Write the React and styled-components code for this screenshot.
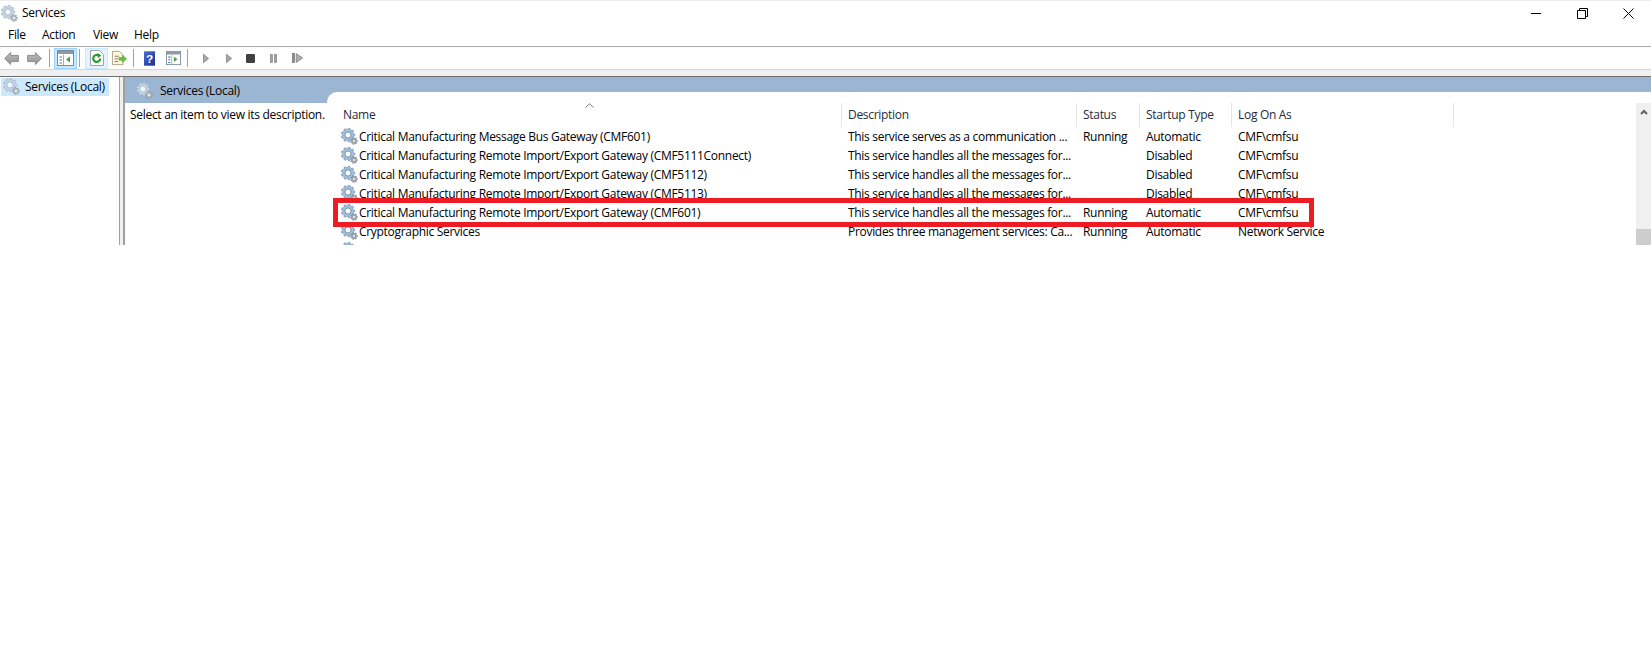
import React from "react";
import styled, { createGlobalStyle } from "styled-components";

const UI_FONT = `"Open Sans", "Noto Sans", "Liberation Sans", sans-serif`;
const COLUMNS = "505px 235px 63px 92px 222px 1fr";

const services = [
  ["Critical Manufacturing Message Bus Gateway (CMF601)", "This service serves as a communication ...", "Running", "Automatic", "CMF\\cmfsu"],
  ["Critical Manufacturing Remote Import/Export Gateway (CMF5111Connect)", "This service handles all the messages for...", "", "Disabled", "CMF\\cmfsu"],
  ["Critical Manufacturing Remote Import/Export Gateway (CMF5112)", "This service handles all the messages for...", "", "Disabled", "CMF\\cmfsu"],
  ["Critical Manufacturing Remote Import/Export Gateway (CMF5113)", "This service handles all the messages for...", "", "Disabled", "CMF\\cmfsu"],
  ["Critical Manufacturing Remote Import/Export Gateway (CMF601)", "This service handles all the messages for...", "Running", "Automatic", "CMF\\cmfsu"],
  ["Cryptographic Services", "Provides three management services: Ca...", "Running", "Automatic", "Network Service"],
  ["", "", "", "", ""],
];

function gearPath(cx, cy, outer, inner, teeth) {
  const pts = [];
  for (let i = 0; i < teeth; i++) {
    const a = (i / teeth) * Math.PI * 2;
    const w = Math.PI / teeth / 1.7;
    [[-w * 1.25, inner], [-w * 0.6, outer], [w * 0.6, outer], [w * 1.25, inner]].forEach(([d, r]) => {
      pts.push(`${(cx + Math.cos(a + d) * r).toFixed(2)} ${(cy + Math.sin(a + d) * r).toFixed(2)}`);
    });
  }
  return `M${pts.join("L")}Z`;
}

const GearIcon = ({ dim }) => (
  <svg width="17" height="17" viewBox="0 0 17 17">
    <path d={gearPath(7, 7, 6.8, 5.4, 9)} fill={dim ? "#c3d5e6" : "#a5c1dc"} stroke={dim ? "#9db2c7" : "#6b8cab"} strokeWidth="0.7" />
    <circle cx="7" cy="7" r="3.1" fill={dim ? "#f3f6fa" : "#f6f9fc"} stroke={dim ? "#9db2c7" : "#5f7d9b"} strokeWidth="0.8" />
    <path d={gearPath(13, 13, 3.6, 2.6, 7)} fill={dim ? "#b4bbc2" : "#98a1a9"} stroke="#79828b" strokeWidth="0.4" />
    <circle cx="13" cy="13" r="1" fill="#fff" />
  </svg>
);

const ArrowIcon = ({ flip }) => (
  <svg width="17" height="15" viewBox="0 0 17 15" style={flip ? { transform: "scaleX(-1)" } : undefined}>
    <defs>
      <linearGradient id="arrowGrey" x1="0" y1="0" x2="0" y2="1">
        <stop offset="0" stopColor="#c0c0c0" />
        <stop offset="1" stopColor="#8f8f8f" />
      </linearGradient>
    </defs>
    <path d="M0.7 7.5 L7.5 0.7 V4 H16.3 V11 H7.5 V14.3 Z" fill="url(#arrowGrey)" stroke="#858585" strokeWidth="1" />
  </svg>
);

const PaneIcon = ({ arrow }) => (
  <svg width="17" height="16" viewBox="0 0 17 16">
    <rect x="0.5" y="0.5" width="16" height="15" fill="#fff" stroke="#7d8a96" />
    <rect x="1" y="1" width="15" height="3" fill="#8d99a5" />
    <path d="M6.5 4.5 V15" stroke="#a5afb9" />
    <path d="M2.5 7 H5 M2.5 10 H5 M2.5 13 H5" stroke="#4e7bb0" strokeWidth="1.2" />
    {arrow === "left" ? (
      <path d="M13 6.5 V12.5 L9 9.5 Z" fill="#3ea33e" />
    ) : (
      <path d="M9 6.5 V12.5 L13 9.5 Z" fill="#3ea33e" />
    )}
  </svg>
);

const RefreshIcon = () => (
  <svg width="14" height="16" viewBox="0 0 14 16">
    <path d="M0.5 0.5 H9.5 L13.5 4.5 V15.5 H0.5 Z" fill="#fff" stroke="#9aa4ad" />
    <path d="M10.2 8.5 A3.5 3.5 0 1 1 8.8 5.6" fill="none" stroke="#2d9a2d" strokeWidth="2.2" />
    <path d="M7.5 3 L11.5 5.5 L8 8 Z" fill="#2d9a2d" />
  </svg>
);

const ExportIcon = () => (
  <svg width="17" height="16" viewBox="0 0 17 16">
    <path d="M0.5 0.5 H8.5 L12.5 4.5 V15.5 H0.5 Z" fill="#fff6dc" stroke="#a89c80" />
    <path d="M3 6 H8 M3 9 H7 M3 12 H7" stroke="#6c6c6c" />
    <path d="M8 7.5 H12 V5 L16.5 9 L12 13 V10.5 H8 Z" fill="#66c23f" stroke="#4a9a2c" strokeWidth="0.6" />
  </svg>
);

const HelpIcon = () => (
  <svg width="13" height="17" viewBox="0 0 13 17">
    <defs>
      <linearGradient id="helpBlue" x1="0" y1="0" x2="1" y2="1">
        <stop offset="0" stopColor="#4a6fd4" />
        <stop offset="1" stopColor="#1a2f8c" />
      </linearGradient>
    </defs>
    <rect width="13" height="17" fill="url(#helpBlue)" />
    <text x="6.5" y="13.5" textAnchor="middle" fontSize="14" fontWeight="700" fill="#fff" fontFamily="Liberation Sans, sans-serif">?</text>
  </svg>
);

const PlayIcon = () => (
  <svg width="8" height="13" viewBox="0 0 8 13">
    <path d="M0.6 0.8 L7.4 6.5 L0.6 12.2 Z" fill="#a8a8a8" stroke="#7e7e7e" />
  </svg>
);

const StopIcon = () => (
  <svg width="11" height="11" viewBox="0 0 11 11">
    <rect width="11" height="11" rx="1.5" fill="#404040" />
  </svg>
);

const PauseIcon = () => (
  <svg width="9" height="11" viewBox="0 0 9 11">
    <rect x="0.5" y="0.5" width="2.6" height="10" fill="#a0a0a0" stroke="#7e7e7e" strokeWidth="0.8" />
    <rect x="5.9" y="0.5" width="2.6" height="10" fill="#a0a0a0" stroke="#7e7e7e" strokeWidth="0.8" />
  </svg>
);

const ResumeIcon = () => (
  <svg width="13" height="12" viewBox="0 0 13 12">
    <rect x="0.5" y="0.5" width="2.4" height="11" fill="#8a8a8a" stroke="#707070" strokeWidth="0.8" />
    <path d="M5 0.8 L12.5 6 L5 11.2 Z" fill="#b0b0b0" stroke="#808080" />
  </svg>
);

const GlobalStyle = createGlobalStyle`
  html, body {
    margin: 0;
    background: #fff;
  }
`;

const Win = styled.div`
  height: 245px;
  overflow: hidden;
  background: #fff;
  color: #000;
  font: 12px ${UI_FONT};
  letter-spacing: -0.3px;
  border-top: 1px solid #ececec;
  box-sizing: border-box;
`;

const TitleBar = styled.div`
  display: flex;
  align-items: center;
  height: 24px;
  padding-left: 1px;
`;

const WinTitle = styled.span`
  margin-left: 4px;
  padding-bottom: 2px;
  flex: 1;
`;

const WinButtons = styled.div`
  display: flex;
  gap: 35px;
  margin-right: 17px;
  align-items: center;
`;

const MenuBar = styled.div`
  display: flex;
  align-items: center;
  height: 21px;
  padding-left: 8px;
  border-bottom: 1px solid #a9a9a9;
`;

const MenuItem = styled.span`
  width: ${(p) => p.$w}px;
  padding-bottom: 2px;
`;

const ToolBar = styled.div`
  display: flex;
  align-items: center;
  height: 22px;
  padding-left: 3px;
  border-bottom: 1px solid #d6d6d6;
`;

const ToolSlot = styled.span`
  display: flex;
  align-items: center;
  justify-content: center;
  width: ${(p) => p.$w}px;
  height: 21px;
  box-sizing: border-box;
  margin-left: ${(p) => p.$gap || 0}px;
  background: ${(p) => (p.$on ? "#cce8ff" : p.$hover ? "#e5f3ff" : "transparent")};
  border: 1px solid ${(p) => (p.$on ? "#99d1ff" : p.$hover ? "#cce8ff" : "transparent")};
`;

const ToolSep = styled.span`
  width: 1px;
  height: 18px;
  background: #a0a0a0;
  margin-left: ${(p) => p.$gap}px;
`;

const GreyBand = styled.div`
  height: 6px;
  background: #f0f0f0;
`;

const Main = styled.div`
  display: flex;
  height: 300px;
  border-top: 1px solid #6d6d6d;
`;

const Tree = styled.div`
  width: 120px;
  flex: none;
  padding: 1px 0 0 1px;
  box-sizing: border-box;
  border-right: 1px solid #a0a0a0;
`;

const TreeItem = styled.div`
  display: flex;
  align-items: center;
  gap: 5px;
  width: 108px;
  height: 18px;
  background: #cce8ff;
  padding: 0 0 2px 2px;
  box-sizing: border-box;
  white-space: nowrap;
`;

const Splitter = styled.div`
  width: 3px;
  flex: none;
  background: #f0f0f0;
  border-right: 2px solid #a0a0a0;
`;

const Panel = styled.div`
  flex: 1;
  min-width: 0;
  display: flex;
  flex-direction: column;
`;

const PanelHead = styled.div`
  display: flex;
  align-items: center;
  gap: 7px;
  height: 26px;
  flex: none;
  padding-left: 11px;
  box-sizing: border-box;
  background: #9bb6d3;
`;

const PanelBody = styled.div`
  display: flex;
  flex: 1;
`;

const Hint = styled.div`
  width: 202px;
  flex: none;
  padding: 3px 0 0 5px;
  box-sizing: border-box;
  white-space: nowrap;
`;

const ListArea = styled.div`
  flex: 1;
  min-width: 0;
  display: flex;
  position: relative;
  margin-top: -11px;
  padding-top: 11px;
  background: #fff;
  border-top-left-radius: 10px;
`;

const List = styled.div`
  flex: 1;
  min-width: 0;
  padding-left: 10px;
  position: relative;
`;

const Row = styled.div`
  display: grid;
  grid-template-columns: ${COLUMNS};
  height: 19px;
  align-items: center;
  white-space: nowrap;
`;

const HeadRow = styled(Row)`
  height: 24px;
  align-items: stretch;
  color: #1e2c40;
`;

const Cell = styled.div`
  display: flex;
  align-items: center;
  gap: 1px;
  padding-left: 6px;
  min-width: 0;
`;

const NameCell = styled(Cell)`
  padding-left: 4px;
`;

const HeadCell = styled(Cell)`
  padding: 0 0 2px 6px;
  border-right: 1px solid #e5e5e5;
`;

const SortMark = styled.svg`
  position: absolute;
  left: 258px;
  top: 0;
`;

const Highlight = styled.div`
  position: absolute;
  left: 6px;
  top: 95px;
  width: 981px;
  height: 29px;
  border: 5px solid #ed1c24;
  box-sizing: border-box;
  pointer-events: none;
`;

const ScrollTrack = styled.div`
  width: 15px;
  flex: none;
  display: flex;
  flex-direction: column;
  align-items: center;
  padding-top: 6px;
  box-sizing: border-box;
  background: #f0f0f0;
`;

const ScrollThumb = styled.div`
  width: 15px;
  height: 40px;
  margin-top: 114px;
  background: #cdcdcd;
`;

export default function App() {
  return (
    <>
      <GlobalStyle />
      <Win>
        <TitleBar>
          <GearIcon dim />
          <WinTitle>Services</WinTitle>
          <WinButtons>
            <svg width="11" height="11" viewBox="0 0 11 11"><path d="M0 5.5 H10" stroke="#000" /></svg>
            <svg width="11" height="11" viewBox="0 0 11 11" fill="none" stroke="#000"><path d="M0.5 2.5 H8.5 V10.5 H0.5 Z M2.5 2.5 V0.5 H10.5 V8.5 H8.5" /></svg>
            <svg width="11" height="11" viewBox="0 0 11 11" stroke="#000"><path d="M0.5 0.5 L10.5 10.5 M10.5 0.5 L0.5 10.5" /></svg>
          </WinButtons>
        </TitleBar>
        <MenuBar>
          <MenuItem $w={34}>File</MenuItem>
          <MenuItem $w={51}>Action</MenuItem>
          <MenuItem $w={41}>View</MenuItem>
          <MenuItem $w={41}>Help</MenuItem>
        </MenuBar>
        <ToolBar>
          <ToolSlot $w={17}><ArrowIcon /></ToolSlot>
          <ToolSlot $w={17} $gap={6}><ArrowIcon flip /></ToolSlot>
          <ToolSep $gap={6} />
          <ToolSlot $w={23} $gap={4} $on><PaneIcon arrow="left" /></ToolSlot>
          <ToolSep $gap={2} />
          <ToolSlot $w={23} $gap={5} $hover><RefreshIcon /></ToolSlot>
          <ToolSlot $w={17} $gap={3}><ExportIcon /></ToolSlot>
          <ToolSep $gap={5} />
          <ToolSlot $w={13} $gap={9}><HelpIcon /></ToolSlot>
          <ToolSlot $w={17} $gap={9}><PaneIcon arrow="right" /></ToolSlot>
          <ToolSep $gap={5} />
          <ToolSlot $w={8} $gap={14}><PlayIcon /></ToolSlot>
          <ToolSlot $w={8} $gap={15}><PlayIcon /></ToolSlot>
          <ToolSlot $w={11} $gap={12}><StopIcon /></ToolSlot>
          <ToolSlot $w={9} $gap={13}><PauseIcon /></ToolSlot>
          <ToolSlot $w={13} $gap={13}><ResumeIcon /></ToolSlot>
        </ToolBar>
        <GreyBand />
        <Main>
          <Tree>
            <TreeItem>
              <GearIcon dim />
              Services (Local)
            </TreeItem>
          </Tree>
          <Splitter />
          <Panel>
            <PanelHead>
              <GearIcon dim />
              Services (Local)
            </PanelHead>
            <PanelBody>
              <Hint>Select an item to view its description.</Hint>
              <ListArea>
                <List>
                  <HeadRow>
                    <HeadCell>Name</HeadCell>
                    <HeadCell>Description</HeadCell>
                    <HeadCell>Status</HeadCell>
                    <HeadCell>Startup Type</HeadCell>
                    <HeadCell>Log On As</HeadCell>
                  </HeadRow>
                  <SortMark width="9" height="5" viewBox="0 0 9 5" fill="none" stroke="#7a7a7a">
                    <path d="M0.5 4.5 L4.5 0.8 L8.5 4.5" />
                  </SortMark>
                  {services.map((s, i) => (
                    <Row key={i}>
                      <NameCell><GearIcon />{s[0]}</NameCell>
                      <Cell>{s[1]}</Cell>
                      <Cell>{s[2]}</Cell>
                      <Cell>{s[3]}</Cell>
                      <Cell>{s[4]}</Cell>
                    </Row>
                  ))}
                  <Highlight />
                </List>
                <ScrollTrack>
                  <svg width="8" height="6" viewBox="0 0 8 6" fill="none" stroke="#606060" strokeWidth="2">
                    <path d="M1 5 L4 2 L7 5" />
                  </svg>
                  <ScrollThumb />
                </ScrollTrack>
              </ListArea>
            </PanelBody>
          </Panel>
        </Main>
      </Win>
    </>
  );
}
